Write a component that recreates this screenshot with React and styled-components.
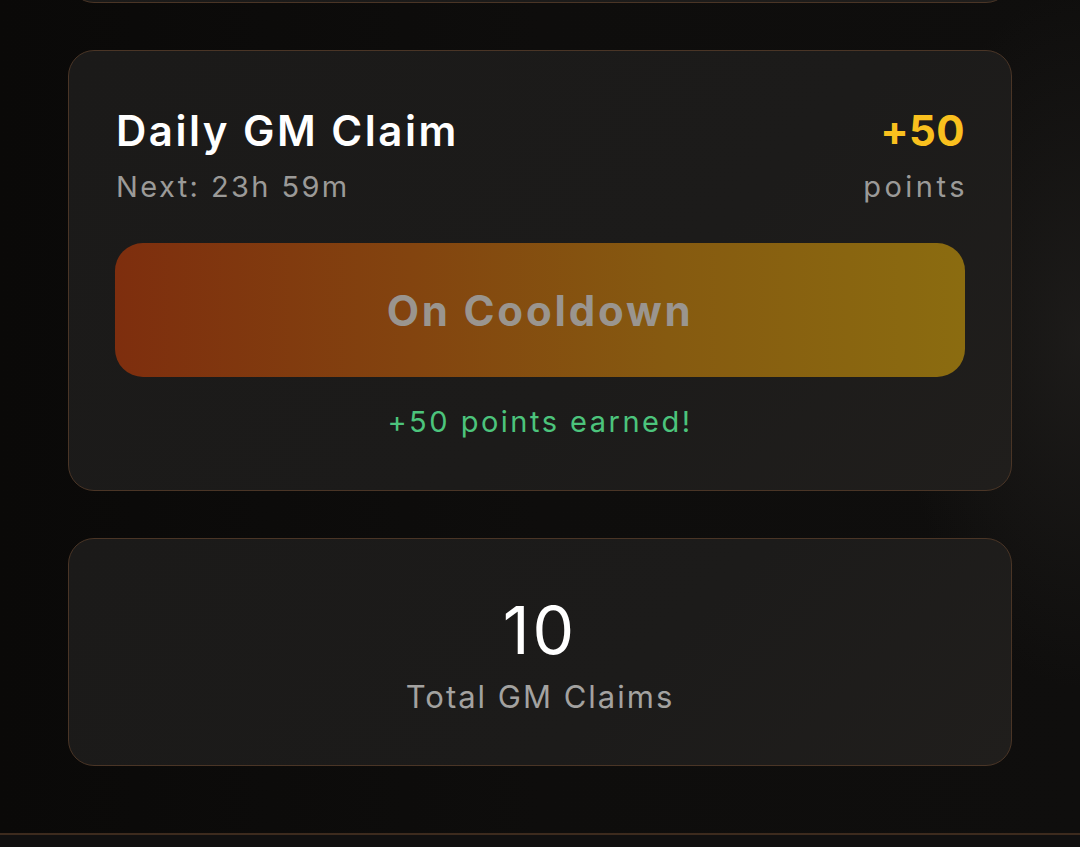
import React from "react";
import styled, { createGlobalStyle } from "styled-components";

const Global = createGlobalStyle`
  html, body { margin: 0; padding: 0; }
  body {
    background: #0c0b0a;
    font-family: Inter, "Noto Sans", sans-serif;
    -webkit-font-smoothing: antialiased;
  }
`;

const Page = styled.div`
  height: 847px;
  overflow: hidden;
  display: flex;
  flex-direction: column;
  background:
    radial-gradient(ellipse 260px 500px at 100% 40%, rgba(40, 38, 36, 0.55), transparent 70%),
    linear-gradient(90deg, #0a0908 0%, #0e0d0c 50%, #0f0e0d 100%);
`;

const Main = styled.main`
  display: flex;
  flex-direction: column;
  gap: 47px;
  padding: 0 68px 67px;
`;

const Card = styled.section`
  box-sizing: border-box;
  border: 1.5px solid #4a3526;
  border-radius: 26px;
  background: linear-gradient(135deg, #1b1a19 0%, #1c1b1a 60%, #201e1c 100%);
  padding: ${(p) => p.$pad || "48px 46px"};
  display: flex;
  flex-direction: column;
  align-items: ${(p) => (p.$center ? "center" : "stretch")};
`;

const PrevCard = styled(Card)`
  height: 200px;
  margin-top: -197px;
`;

const HeaderRow = styled.div`
  display: flex;
  justify-content: space-between;
  align-items: flex-start;
`;

const Col = styled.div`
  display: flex;
  flex-direction: column;
  align-items: ${(p) => (p.$right ? "flex-end" : "flex-start")};
`;

const Title = styled.h2`
  margin: 0 0 0 1px;
  font-size: 42px;
  line-height: 64px;
  font-weight: 600;
  color: #ffffff;
  letter-spacing: 2.5px;
`;

const Reward = styled.div`
  font-size: 42px;
  line-height: 64px;
  font-weight: 700;
  color: #f9c01e;
  letter-spacing: 0.4px;
`;

const Sub = styled.div`
  font-size: 29px;
  line-height: 48px;
  font-weight: 400;
  color: #9b9a98;
  letter-spacing: ${(p) => p.$ls || "2.4px"};
  margin-right: ${(p) => (p.$right ? "-3px" : "0")};
  margin-left: ${(p) => (p.$right ? "0" : "1px")};
`;

const ClaimButton = styled.button`
  margin-top: 32px;
  height: 134px;
  border: none;
  border-radius: 28px;
  background: linear-gradient(90deg, #7e2e0e 0%, #83440f 35%, #865a10 65%, #8b6c10 100%);
  color: #9a958f;
  font-family: inherit;
  font-size: 42px;
  font-weight: 700;
  letter-spacing: 2.8px;
  cursor: not-allowed;
`;

const Earned = styled.div`
  margin-top: 25px;
  text-align: center;
  font-size: 29px;
  line-height: 40px;
  color: #4cc47c;
  letter-spacing: 2.5px;
`;

const BigNumber = styled.div`
  font-size: 66px;
  line-height: 86px;
  font-weight: 400;
  color: #ffffff;
  letter-spacing: 3px;
`;

const StatLabel = styled.div`
  font-size: 31px;
  line-height: 48px;
  color: #a3a2a0;
  letter-spacing: 2px;
`;

const BottomNav = styled.nav`
  flex: 0 0 80px;
  border-top: 2px solid #3d2b1e;
  background: #111010;
`;

export default function App() {
  return (
    <>
      <Global />
      <Page>
        <Main>
          <PrevCard />
          <Card>
            <HeaderRow>
              <Col>
                <Title>Daily GM Claim</Title>
                <Sub>Next: 23h 59m</Sub>
              </Col>
              <Col $right>
                <Reward>+50</Reward>
                <Sub $right $ls="3.5px">points</Sub>
              </Col>
            </HeaderRow>
            <ClaimButton disabled>On Cooldown</ClaimButton>
            <Earned>+50 points earned!</Earned>
          </Card>
          <Card $center $pad="48px 48px 44px">
            <BigNumber>10</BigNumber>
            <StatLabel>Total GM Claims</StatLabel>
          </Card>
        </Main>
        <BottomNav />
      </Page>
    </>
  );
}
